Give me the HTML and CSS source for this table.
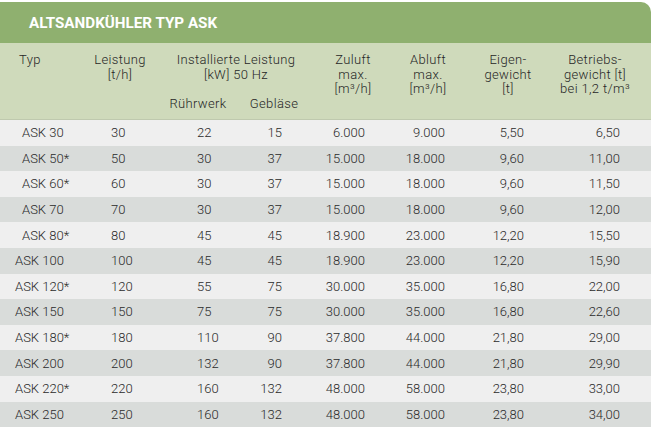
FILE: index.html
```html
<!DOCTYPE html>
<html lang="de">
<head>
<meta charset="utf-8">
<title>Altsandkühler Typ ASK</title>
<link rel="stylesheet" href="styles.css">
</head>
<body>
<div class="card">
  <div class="title">ALTSANDKÜHLER TYP ASK</div>
  <div class="head">
    <div class="h h-typ">Typ</div>
    <div class="h h-leist">Leistung<br>[t/h]</div>
    <div class="h h-inst">Installierte Leistung<br>[kW] 50 Hz</div>
    <div class="h h-zu">Zuluft<br>max.<br>[m³/h]</div>
    <div class="h h-ab">Abluft<br>max.<br>[m³/h]</div>
    <div class="h h-eig">Eigen-<br>gewicht<br>[t]</div>
    <div class="h h-bet">Betriebs-<br>gewicht [t]<br>bei 1,2 t/m³</div>
    <div class="h h-ruehr">Rührwerk</div>
    <div class="h h-geb">Gebläse</div>
  </div>
  <div class="rows">
    <div class="row"><span class="t2">ASK 30</span><span>30</span><span>22</span><span>15</span><span>6.000</span><span>9.000</span><span>5,50</span><span>6,50</span></div>
    <div class="row"><span class="t2">ASK 50*</span><span>50</span><span>30</span><span>37</span><span>15.000</span><span>18.000</span><span>9,60</span><span>11,00</span></div>
    <div class="row"><span class="t2">ASK 60*</span><span>60</span><span>30</span><span>37</span><span>15.000</span><span>18.000</span><span>9,60</span><span>11,50</span></div>
    <div class="row"><span class="t2">ASK 70</span><span>70</span><span>30</span><span>37</span><span>15.000</span><span>18.000</span><span>9,60</span><span>12,00</span></div>
    <div class="row"><span class="t2">ASK 80*</span><span>80</span><span>45</span><span>45</span><span>18.900</span><span>23.000</span><span>12,20</span><span>15,50</span></div>
    <div class="row"><span>ASK 100</span><span>100</span><span>45</span><span>45</span><span>18.900</span><span>23.000</span><span>12,20</span><span>15,90</span></div>
    <div class="row"><span>ASK 120*</span><span>120</span><span>55</span><span>75</span><span>30.000</span><span>35.000</span><span>16,80</span><span>22,00</span></div>
    <div class="row"><span>ASK 150</span><span>150</span><span>75</span><span>75</span><span>30.000</span><span>35.000</span><span>16,80</span><span>22,60</span></div>
    <div class="row"><span>ASK 180*</span><span>180</span><span>110</span><span>90</span><span>37.800</span><span>44.000</span><span>21,80</span><span>29,00</span></div>
    <div class="row"><span>ASK 200</span><span>200</span><span>132</span><span>90</span><span>37.800</span><span>44.000</span><span>21,80</span><span>29,90</span></div>
    <div class="row"><span>ASK 220*</span><span>220</span><span>160</span><span>132</span><span>48.000</span><span>58.000</span><span>23,80</span><span>33,00</span></div>
    <div class="row"><span>ASK 250</span><span>250</span><span>160</span><span>132</span><span>48.000</span><span>58.000</span><span>23,80</span><span>34,00</span></div>
  </div>
</div>
</body>
</html>
```
FILE: styles.css
```css
html, body {
  margin: 0;
  padding: 0;
  background: #ffffff;
}

body {
  font-family: Roboto, "Liberation Sans", sans-serif;
  color: #2a2a2a;
}

.card {
  width: 651px;
  padding-top: 2px;
}

.title {
  height: 41px;
  box-sizing: border-box;
  background: #8fb06f;
  border-top-right-radius: 10px;
  color: #ffffff;
  font-weight: 700;
  font-size: 15.2px;
  line-height: 42px;
  padding-left: 29px;
}

.head {
  display: grid;
  grid-template-columns: 80px 80px 76px 76px 82px 68px 92px 97px;
  grid-template-rows: 43.5px 14.5px;
  background: #cfdabb;
  padding: 10px 0 8px;
  border-bottom: 1px solid #bfc9ae;
  font-size: 13px;
  letter-spacing: 0.35px;
  font-weight: 300;
  line-height: 14.5px;
  color: #262626;
  text-align: center;
  white-space: nowrap;
}

.h-typ { grid-column: 1; grid-row: 1; text-align: left; padding-left: 19px; }
.h-leist { grid-column: 2; grid-row: 1; }
.h-inst { grid-column: 3 / span 2; grid-row: 1; }
.h-zu { grid-column: 5; grid-row: 1 / span 2; }
.h-ab { grid-column: 6; grid-row: 1 / span 2; }
.h-eig { grid-column: 7; grid-row: 1 / span 2; }
.h-bet { grid-column: 8; grid-row: 1 / span 2; padding-right: 15px; }
.h-ruehr { grid-column: 3; grid-row: 2; }
.h-geb { grid-column: 4; grid-row: 2; }

.row {
  display: grid;
  grid-template-columns: 80px 80px 76px 76px 82px 68px 92px 97px;
  height: 25.6px;
  align-items: center;
  font-size: 13px;
  font-weight: 300;
  white-space: nowrap;
}

.row:nth-child(odd) { background: #efefef; }
.row:nth-child(even) { background: #d9dcda; }

.row > span:nth-child(1) { padding-left: 15px; }
.row > span.t2 { padding-left: 22px; }
.row > span:nth-child(2) { padding-left: 31px; }
.row > span:nth-child(3) { padding-left: 37px; }
.row > span:nth-child(4) { text-align: right; padding-right: 30px; }
.row > span:nth-child(5) { text-align: right; padding-right: 29px; }
.row > span:nth-child(6) { text-align: right; padding-right: 17px; }
.row > span:nth-child(7) { text-align: right; padding-right: 30px; }
.row > span:nth-child(8) { text-align: right; padding-right: 31px; }
```
